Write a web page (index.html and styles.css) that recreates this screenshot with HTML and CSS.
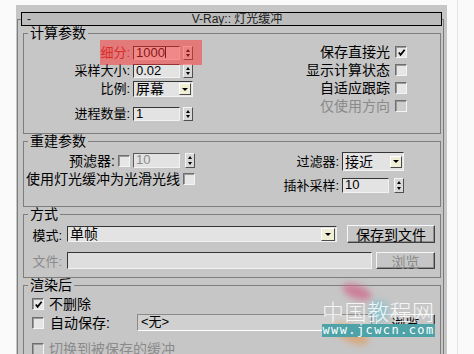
FILE: index.html
```html
<!DOCTYPE html>
<html lang="zh-CN">
<head>
    <meta charset="UTF-8">
    <meta name="viewport" content="width=device-width, initial-scale=1.0">
    <title>V-Ray:: 灯光缓冲</title>
    <link rel="stylesheet" href="styles.css">
</head>
<body>
<div class="page">
    <div class="panel">
        <div class="rollout">
            <div class="titlebar">
                <span class="collapse">-</span>
                <span class="title">V-Ray:: 灯光缓冲</span>
            </div>

            <!-- 计算参数 -->
            <fieldset class="group g-calc">
                <legend>计算参数</legend>
                <div class="cols">
                    <div class="form">
                        <div class="row r1">
                            <span class="highlight"></span>
                            <span class="lbl hl-text">细分:</span>
                            <span class="field num">1000<i class="caret"></i></span>
                            <span class="spin"></span>
                        </div>
                        <div class="row r2">
                            <span class="lbl">采样大小:</span>
                            <span class="field num">0.02</span>
                            <span class="spin"></span>
                        </div>
                        <div class="row r3">
                            <span class="lbl">比例:</span>
                            <span class="select s-ratio"><span class="value">屏幕</span><span class="arrow"></span></span>
                        </div>
                        <div class="row r4">
                            <span class="lbl">进程数量:</span>
                            <span class="field num">1</span>
                            <span class="spin"></span>
                        </div>
                    </div>
                    <div class="checks">
                        <span>保存直接光</span><span class="chk on"><svg viewBox="0 0 10 10"><path d="M2 5 L4 7.5 L8.5 2" fill="none" stroke="#000" stroke-width="2"/></svg></span>
                        <span>显示计算状态</span><span class="chk"></span>
                        <span>自适应跟踪</span><span class="chk"></span>
                        <span class="dim">仅使用方向</span><span class="chk off"></span>
                    </div>
                </div>
            </fieldset>

            <!-- 重建参数 -->
            <fieldset class="group g-rebuild">
                <legend>重建参数</legend>
                <div class="cols">
                    <div class="form">
                        <div class="row">
                            <span class="lbl lbl-pre">预滤器:</span>
                            <span class="chk"></span>
                            <span class="field num dis">10</span>
                            <span class="spin"></span>
                        </div>
                        <div class="row r-smooth">
                            <span>使用灯光缓冲为光滑光线</span>
                            <span class="chk"></span>
                        </div>
                    </div>
                    <div class="side">
                        <span class="side-lbl">过滤器:</span>
                        <span class="select s-filter"><span class="value">接近</span><span class="arrow"></span></span>
                        <span class="side-lbl">插补采样:</span>
                        <span class="ctl"><span class="field num">10</span><span class="spin"></span></span>
                    </div>
                </div>
            </fieldset>

            <!-- 方式 -->
            <fieldset class="group g-mode">
                <legend>方式</legend>
                <div class="row m1">
                    <span class="lbl-mode">模式:</span>
                    <span class="select s-mode"><span class="value">单帧</span><span class="arrow"></span></span>
                    <span class="btn b-save">保存到文件</span>
                </div>
                <div class="row m2">
                    <span class="lbl-mode dim">文件:</span>
                    <span class="field f-file"></span>
                    <span class="btn b-browse dim">浏览</span>
                </div>
            </fieldset>

            <!-- 渲染后 -->
            <fieldset class="group g-after">
                <legend>渲染后</legend>
                <div class="row a1">
                    <span class="chk on"><svg viewBox="0 0 10 10"><path d="M2 5 L4 7.5 L8.5 2" fill="none" stroke="#000" stroke-width="2"/></svg></span>
                    <span class="a-text">不删除</span>
                </div>
                <div class="row a2">
                    <span class="chk"></span>
                    <span class="a-text a-auto">自动保存:</span>
                    <span class="field f-none">&lt;无&gt;</span>
                    <span class="btn b-browse">浏览</span>
                </div>
                <div class="row a3">
                    <span class="chk off"></span>
                    <span class="a-text dim">切换到被保存的缓冲</span>
                </div>
            </fieldset>
        </div>
    </div>

    <div class="watermark">
        <span class="streak pink"></span>
        <span class="streak cyan"></span>
        <span class="streak orange"></span>
        <div class="wm-cn">中国教程网</div>
        <div class="wm-url">www.jcwcn.com</div>
    </div>
</div>
</body>
</html>
```

FILE: styles.css
```css
body {
    margin: 0;
    background-color: #fafafa;
    color: #000;
    font-family: "Liberation Sans", "Noto Sans CJK SC", sans-serif;
    font-size: 14px;
    overflow: hidden;
}
.page {
    position: relative;
    width: 458px;
    height: 354px;
    padding: 5px 0 0 16px;
    border-right: 1px solid #e3e3e3;
    box-sizing: border-box;
    overflow: hidden;
}
.panel {
    width: 431px;
    height: 420px;
    background-color: #c6c6c6;
    padding: 14px 3px 0 1px;
    box-sizing: border-box;
}
.rollout {
    height: 420px;
    border: 1px solid #7c7c7c;
    border-bottom: none;
}
.titlebar {
    display: flex;
    align-items: center;
    height: 14px;
    box-sizing: border-box;
    margin: -8px 1px 0 3px;
    border: 1px solid #000;
    background-color: #bcbcbc;
    font-size: 12px;
    line-height: 12px;
    color: #222;
}
.collapse {
    width: 12px;
    padding-left: 5px;
}
.title {
    flex: 1;
    text-align: center;
    padding-right: 6px;
}

/* group boxes */
.group {
    margin: 0 2px 0 5px;
    padding: 0 2px;
    border: 1px solid #7e7e7e;
    box-sizing: border-box;
    min-width: 0;
}
.group legend {
    margin-left: 2px;
    padding: 0 2px;
    font-size: 14px;
    line-height: 14px;
}
.g-calc { height: 108px; }
.g-rebuild { height: 73px; }
.g-mode { height: 71px; }
.g-after { height: 110px; }

.cols {
    display: flex;
    justify-content: space-between;
    align-items: flex-start;
}
.row {
    display: flex;
    align-items: center;
}
.lbl {
    width: 104px;
    margin-right: 3px;
    text-align: right;
    font-size: 13px;
    line-height: 14px;
    white-space: nowrap;
}
.dim { color: #8a8a8a; }

/* controls */
.field {
    box-sizing: border-box;
    height: 14px;
    border: 1px solid;
    border-color: #353535 #f2f2f2 #f2f2f2 #353535;
    background-color: #e3e3e3;
    font-size: 13px;
    line-height: 12px;
    padding-left: 2px;
    white-space: nowrap;
}
.field.num { width: 47px; }
.field.dis { color: #8a8a8a; border-color: #5a5a5a #f2f2f2 #f2f2f2 #5a5a5a; }
.caret {
    display: inline-block;
    width: 1px;
    height: 11px;
    background-color: #000;
    vertical-align: -1px;
}
.spin {
    display: flex;
    flex-direction: column;
    align-items: center;
    justify-content: space-evenly;
    width: 10px;
    height: 14px;
    box-sizing: border-box;
    margin-left: 3px;
    border: 1px solid;
    border-color: #f4f4f4 #505050 #505050 #f4f4f4;
    background-color: #d8d8d8;
}
.spin::before {
    content: "";
    border-left: 2px solid transparent;
    border-right: 2px solid transparent;
    border-bottom: 3px solid #000;
}
.spin::after {
    content: "";
    border-left: 2px solid transparent;
    border-right: 2px solid transparent;
    border-top: 3px solid #000;
}
.select {
    display: flex;
    align-items: center;
    box-sizing: border-box;
    border: 1px solid;
    border-color: #353535 #f2f2f2 #f2f2f2 #353535;
    background-color: #e3e3e3;
    padding: 0 1px 0 2px;
}
.select .value {
    flex: 1;
    font-size: 14px;
    line-height: 14px;
}
.arrow {
    display: flex;
    align-items: center;
    justify-content: center;
    width: 12px;
    height: 12px;
    box-sizing: border-box;
    border: 1px solid;
    border-color: #fff #4a4a4a #4a4a4a #fff;
    background-color: #f1eed6;
}
.arrow::after {
    content: "";
    border-left: 3px solid transparent;
    border-right: 3px solid transparent;
    border-top: 3px solid #000;
}
.chk {
    display: flex;
    align-items: center;
    justify-content: center;
    width: 12px;
    height: 12px;
    box-sizing: border-box;
    border: 1px solid;
    border-color: #6e6e6e #f4f4f4 #f4f4f4 #6e6e6e;
    box-shadow: inset 1px 1px 0 #9a9a9a;
    background-color: #e6e6e6;
}
.chk svg {
    width: 9px;
    height: 9px;
}
.chk.off { background-color: #cdcdcd; }
.btn {
    display: flex;
    align-items: center;
    justify-content: center;
    box-sizing: border-box;
    border: 1px solid;
    border-color: #f6f6f6 #404040 #404040 #f6f6f6;
    box-shadow: inset -1px -1px 0 #8e8e8e;
    font-size: 14px;
}

/* 计算参数 */
.g-calc .cols { padding-top: 6px; }
.r1 {
    position: relative;
    margin-bottom: 4px;
}
.r2 { margin-bottom: 3px; }
.r3 { margin-bottom: 10px; }
.highlight {
    position: absolute;
    left: 74px;
    top: -6px;
    width: 102px;
    height: 25px;
    background-color: rgba(255, 45, 45, 0.5);
}
.hl-text { color: #b02a2a; }
.s-ratio {
    width: 60px;
    height: 16px;
}
.checks {
    display: grid;
    grid-template-columns: auto 12px;
    grid-auto-rows: 18px;
    column-gap: 5px;
    align-items: center;
    justify-items: end;
    margin-top: -3px;
    padding-right: 31px;
    line-height: 14px;
}

/* 重建参数 */
.g-rebuild .cols { padding-top: 4px; }
.g-rebuild .form { margin-top: 1px; }
.lbl-pre {
    width: 89px;
    font-size: 14px;
}
.g-rebuild .form .chk { margin-right: 3px; }
.g-rebuild .field { height: 15px; }
.g-rebuild .spin { height: 15px; margin-left: 5px; }
.r-smooth {
    margin-top: 4px;
    line-height: 14px;
}
.r-smooth .chk { margin-left: 3px; }
.side {
    display: grid;
    grid-template-columns: auto 62px;
    column-gap: 3px;
    row-gap: 7px;
    align-items: center;
    padding-right: 34px;
}
.side-lbl {
    text-align: right;
    font-size: 13px;
    line-height: 14px;
}
.s-filter { height: 19px; }
.ctl { display: flex; }

/* 方式 */
.m1 {
    margin-top: 4px;
    height: 18px;
}
.m2 {
    margin-top: 9px;
    height: 17px;
}
.lbl-mode {
    width: 36px;
    margin-right: 5px;
    text-align: right;
    font-size: 13px;
}
.s-mode {
    width: 270px;
    height: 16px;
    margin-right: 10px;
}
.s-mode .arrow {
    width: 14px;
    height: 13px;
}
.b-save {
    width: 88px;
    height: 18px;
}
.f-file {
    width: 305px;
    height: 17px;
    margin-right: 4px;
    background-color: #dedede;
}
.b-browse {
    width: 59px;
    height: 17px;
}

/* 渲染后 */
.g-after .row { padding-left: 6px; }
.a1 {
    margin-top: 5px;
    height: 14px;
}
.a2 {
    margin-top: 2px;
    height: 19px;
}
.a3 {
    margin-top: 10px;
    height: 14px;
}
.a-text {
    margin-left: 5px;
    line-height: 14px;
}
.a-auto {
    width: 87px;
    margin-left: 6px;
}
.f-none {
    width: 235px;
    height: 17px;
    margin-right: 4px;
    border-color: #8a8a8a #8a8a8a #fff #8a8a8a;
    background-color: #d0d0d0;
    font-size: 13px;
    line-height: 14px;
    padding-left: 3px;
}
.a2 .b-browse { height: 18px; }

/* watermark over the bottom right corner */
.watermark {
    position: absolute;
    left: 322px;
    top: 296px;
    width: 113px;
}
.streak {
    position: absolute;
    border-radius: 50%;
    filter: blur(3px);
}
.pink {
    left: 20px;
    top: -11px;
    width: 30px;
    height: 14px;
    background-color: rgba(205, 105, 140, 0.75);
    transform: rotate(20deg);
}
.cyan {
    left: 48px;
    top: 4px;
    width: 18px;
    height: 22px;
    background-color: rgba(110, 190, 205, 0.6);
}
.orange {
    left: 10px;
    top: 30px;
    width: 38px;
    height: 16px;
    background-color: rgba(225, 150, 80, 0.6);
    transform: rotate(25deg);
}
.wm-cn {
    position: relative;
    font-family: "Noto Sans CJK SC", sans-serif;
    font-weight: 300;
    font-size: 22px;
    line-height: 28px;
    letter-spacing: 0.5px;
    color: rgba(255, 255, 255, 0.85);
    white-space: nowrap;
}
.wm-url {
    position: relative;
    height: 13px;
    background-color: #4ea3a9;
    color: #fff;
    font-family: "DejaVu Sans Mono", monospace;
    font-size: 12px;
    line-height: 13px;
    letter-spacing: 1.4px;
    text-align: center;
    white-space: nowrap;
}
```
